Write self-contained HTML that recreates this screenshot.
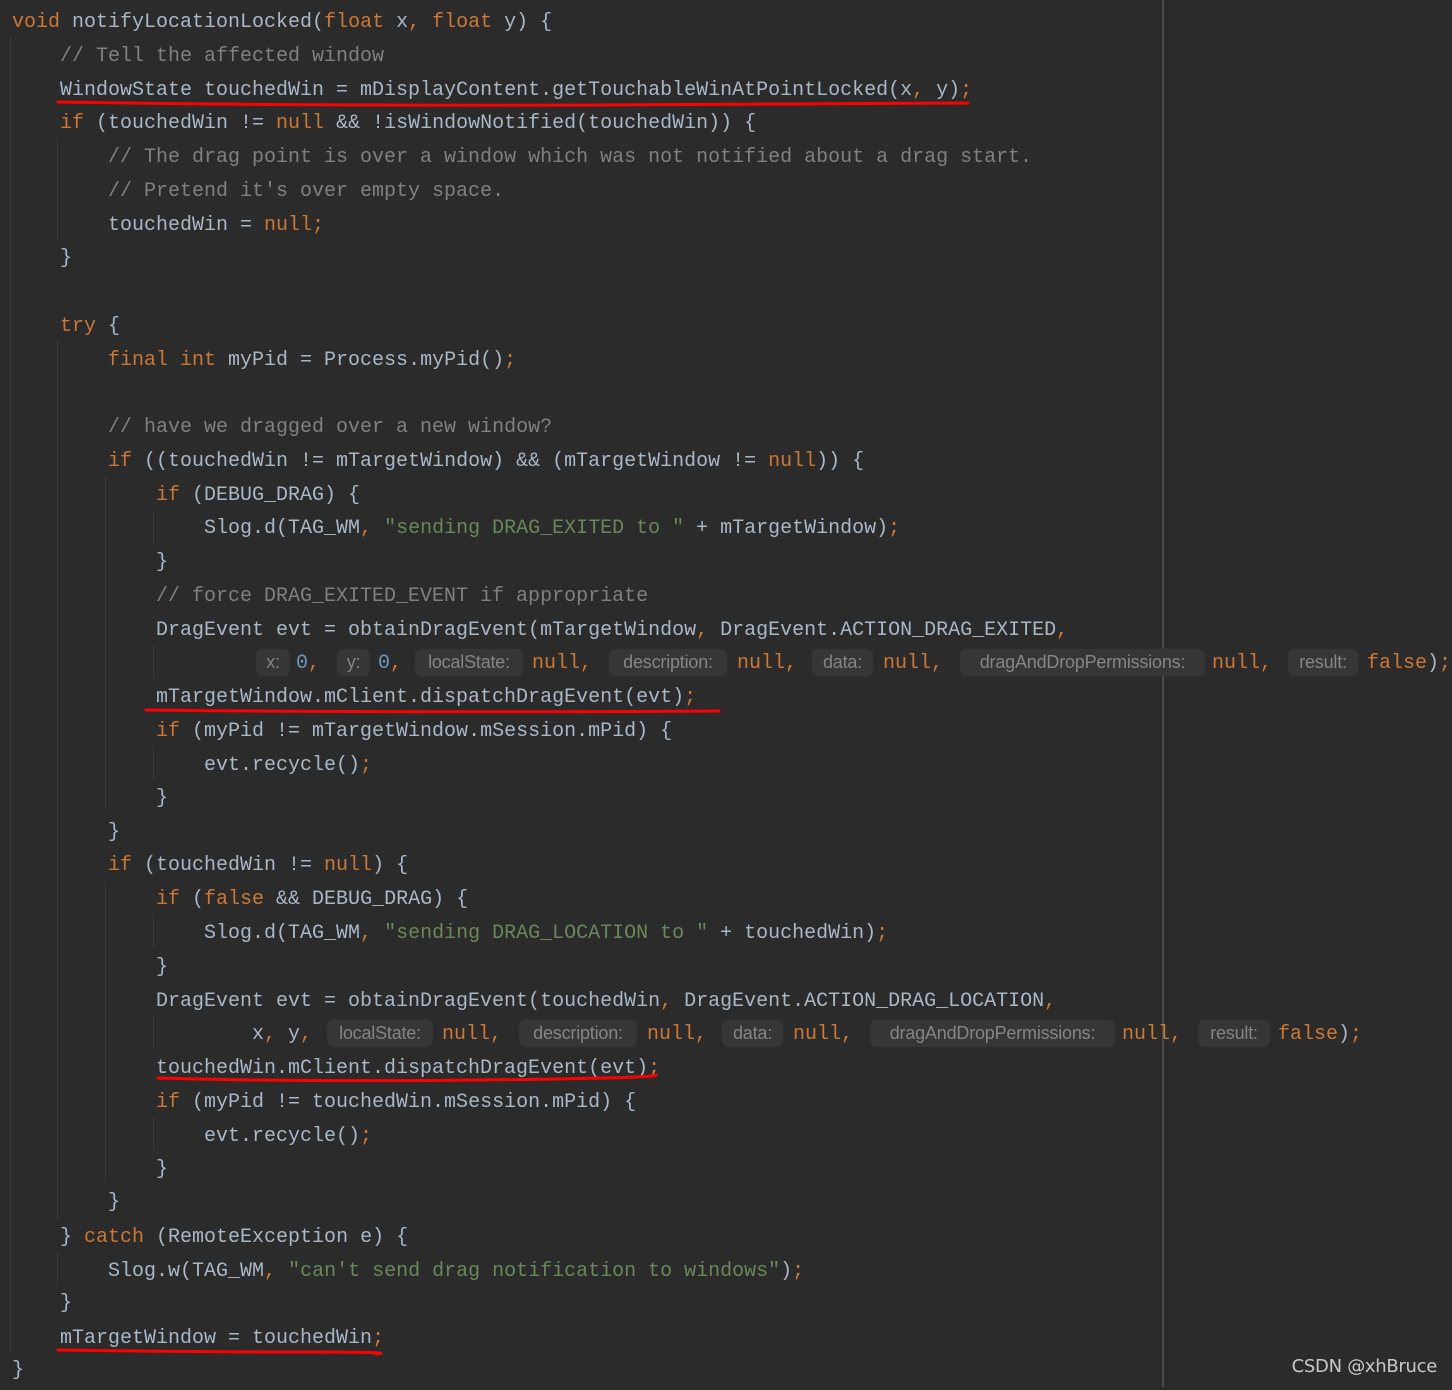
<!DOCTYPE html>
<html><head><meta charset="utf-8"><style>
body{margin:0;width:1452px;height:1387px;background:#2b2b2b;overflow:hidden;position:relative;font-family:"Liberation Mono",monospace;font-size:20px;color:#a9b7c6}
#w{position:absolute;left:0;top:3px;width:1452px;height:1387px}
.l{position:absolute;white-space:pre;line-height:34px;height:34px}
.k{color:#cc7832}.c{color:#808080}.s{color:#6a8759}.n{color:#6897bb}
.h{position:absolute;top:2px;height:27px;line-height:27px;background:#363636;color:#858585;font-family:"Liberation Sans",sans-serif;font-size:18px;border-radius:6px;text-align:center;letter-spacing:-0.2px}
.g{position:absolute;width:1px;background:#3a3a3a}
</style></head><body>
<div class="g" style="left:10px;top:36px;height:1316px"></div>
<div class="g" style="left:57px;top:138px;height:102px"></div>
<div class="g" style="left:57px;top:340px;height:880px"></div>
<div class="g" style="left:105px;top:476px;height:332px"></div>
<div class="g" style="left:105px;top:882px;height:300px"></div>
<div class="g" style="left:57px;top:1252px;height:34px"></div>
<div class="g" style="left:153px;top:510px;height:34px"></div>
<div class="g" style="left:153px;top:645px;height:34px"></div>
<div class="g" style="left:153px;top:746px;height:34px"></div>
<div class="g" style="left:153px;top:914px;height:34px"></div>
<div class="g" style="left:153px;top:1016px;height:34px"></div>
<div class="g" style="left:153px;top:1117px;height:34px"></div>
<div style="position:absolute;left:1162px;top:0;width:2px;height:1387px;background:#4a4a4a"></div>
<div id="w">
<div class="l" style="left:12px;top:3px"><span class="k">void</span> notifyLocationLocked(<span class="k">float</span> x<span class="k">,</span> <span class="k">float</span> y) {</div>
<div class="l c" style="left:60px;top:37px">// Tell the affected window</div>
<div class="l" style="left:60px;top:71px">WindowState touchedWin = mDisplayContent.getTouchableWinAtPointLocked(x<span class="k">,</span> y)<span class="k">;</span></div>
<div class="l" style="left:60px;top:104px"><span class="k">if</span> (touchedWin != <span class="k">null</span> &amp;&amp; !isWindowNotified(touchedWin)) {</div>
<div class="l c" style="left:108px;top:138px">// The drag point is over a window which was not notified about a drag start.</div>
<div class="l c" style="left:108px;top:172px">// Pretend it's over empty space.</div>
<div class="l" style="left:108px;top:206px">touchedWin = <span class="k">null;</span></div>
<div class="l" style="left:60px;top:239px">}</div>
<div class="l" style="left:60px;top:307px"><span class="k">try</span> {</div>
<div class="l" style="left:108px;top:341px"><span class="k">final int</span> myPid = Process.myPid()<span class="k">;</span></div>
<div class="l c" style="left:108px;top:408px">// have we dragged over a new window?</div>
<div class="l" style="left:108px;top:442px"><span class="k">if</span> ((touchedWin != mTargetWindow) &amp;&amp; (mTargetWindow != <span class="k">null</span>)) {</div>
<div class="l" style="left:156px;top:476px"><span class="k">if</span> (DEBUG_DRAG) {</div>
<div class="l" style="left:204px;top:509px">Slog.d(TAG_WM<span class="k">,</span> <span class="s">"sending DRAG_EXITED to "</span> + mTargetWindow)<span class="k">;</span></div>
<div class="l" style="left:156px;top:543px">}</div>
<div class="l c" style="left:156px;top:577px">// force DRAG_EXITED_EVENT if appropriate</div>
<div class="l" style="left:156px;top:611px">DragEvent evt = obtainDragEvent(mTargetWindow<span class="k">,</span> DragEvent.ACTION_DRAG_EXITED<span class="k">,</span></div>
<div class="l" style="left:0;top:644px;width:1452px">
<span class="h" style="left:256px;width:34px">x:</span><span class="l" style="left:296px;top:0"><span class="n">0</span><span class="k">,</span></span>
<span class="h" style="left:337px;width:33px">y:</span><span class="l" style="left:378px;top:0"><span class="n">0</span><span class="k">,</span></span>
<span class="h" style="left:415px;width:108px">localState:</span><span class="l k" style="left:532px;top:0">null,</span>
<span class="h" style="left:609px;width:118px">description:</span><span class="l k" style="left:737px;top:0">null,</span>
<span class="h" style="left:812px;width:61px">data:</span><span class="l k" style="left:883px;top:0">null,</span>
<span class="h" style="left:960px;width:245px">dragAndDropPermissions:</span><span class="l k" style="left:1212px;top:0">null,</span>
<span class="h" style="left:1288px;width:70px">result:</span><span class="l" style="left:1367px;top:0"><span class="k">false</span>)<span class="k">;</span></span>
</div>
<div class="l" style="left:156px;top:678px">mTargetWindow.mClient.dispatchDragEvent(evt)<span class="k">;</span></div>
<div class="l" style="left:156px;top:712px"><span class="k">if</span> (myPid != mTargetWindow.mSession.mPid) {</div>
<div class="l" style="left:204px;top:746px">evt.recycle()<span class="k">;</span></div>
<div class="l" style="left:156px;top:779px">}</div>
<div class="l" style="left:108px;top:813px">}</div>
<div class="l" style="left:108px;top:846px"><span class="k">if</span> (touchedWin != <span class="k">null</span>) {</div>
<div class="l" style="left:156px;top:880px"><span class="k">if</span> (<span class="k">false</span> &amp;&amp; DEBUG_DRAG) {</div>
<div class="l" style="left:204px;top:914px">Slog.d(TAG_WM<span class="k">,</span> <span class="s">"sending DRAG_LOCATION to "</span> + touchedWin)<span class="k">;</span></div>
<div class="l" style="left:156px;top:948px">}</div>
<div class="l" style="left:156px;top:982px">DragEvent evt = obtainDragEvent(touchedWin<span class="k">,</span> DragEvent.ACTION_DRAG_LOCATION<span class="k">,</span></div>
<div class="l" style="left:0;top:1015px;width:1452px">
<span class="l" style="left:252px;top:0">x<span class="k">,</span> y<span class="k">,</span></span>
<span class="h" style="left:327px;width:106px">localState:</span><span class="l k" style="left:442px;top:0">null,</span>
<span class="h" style="left:519px;width:118px">description:</span><span class="l k" style="left:647px;top:0">null,</span>
<span class="h" style="left:722px;width:61px">data:</span><span class="l k" style="left:793px;top:0">null,</span>
<span class="h" style="left:870px;width:245px">dragAndDropPermissions:</span><span class="l k" style="left:1122px;top:0">null,</span>
<span class="h" style="left:1198px;width:72px">result:</span><span class="l" style="left:1278px;top:0"><span class="k">false</span>)<span class="k">;</span></span>
</div>
<div class="l" style="left:156px;top:1049px">touchedWin.mClient.dispatchDragEvent(evt)<span class="k">;</span></div>
<div class="l" style="left:156px;top:1083px"><span class="k">if</span> (myPid != touchedWin.mSession.mPid) {</div>
<div class="l" style="left:204px;top:1117px">evt.recycle()<span class="k">;</span></div>
<div class="l" style="left:156px;top:1150px">}</div>
<div class="l" style="left:108px;top:1183px">}</div>
<div class="l" style="left:60px;top:1218px">} <span class="k">catch</span> (RemoteException e) {</div>
<div class="l" style="left:108px;top:1252px">Slog.w(TAG_WM<span class="k">,</span> <span class="s">"can't send drag notification to windows"</span>)<span class="k">;</span></div>
<div class="l" style="left:60px;top:1284px">}</div>
<div class="l" style="left:60px;top:1319px">mTargetWindow = touchedWin<span class="k">;</span></div>
<div class="l" style="left:12px;top:1351px">}</div>
</div>
<svg style="position:absolute;left:0;top:0" width="1452" height="1387">
<g fill="none" stroke="#ff0000" stroke-width="3" stroke-linecap="round">
<path d="M58 102 Q300 106 600 105 T968 103"/>
<path d="M146 710 Q400 713 719 711"/>
<path d="M158 1078 Q300 1082 480 1080 T656 1075"/>
<path d="M58 1350 Q200 1352 300 1352 T376 1354"/>
</g></svg>
<div style="position:absolute;right:15px;top:1356px;font-family:'DejaVu Sans','Liberation Sans',sans-serif;font-size:18px;color:#c8c8c8;letter-spacing:-0.3px">CSDN @xhBruce</div>
</body></html>
